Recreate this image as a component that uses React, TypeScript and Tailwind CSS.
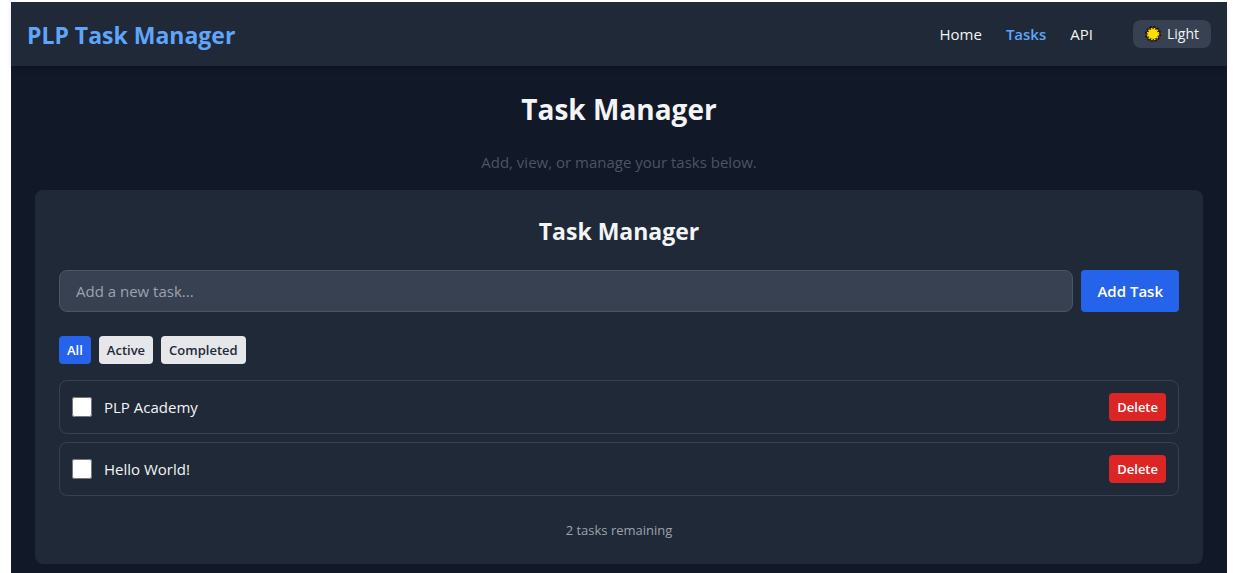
import { useState } from "react";
import type { FormEvent } from "react";

type Task = { id: number; title: string; done: boolean };
type Filter = "All" | "Active" | "Completed";

const filters: Filter[] = ["All", "Active", "Completed"];

function SunIcon() {
  return (
    <svg viewBox="0 0 16 16" className="size-4 shrink-0" aria-hidden="true">
      <circle cx="8" cy="8" r="6.9" fill="none" stroke="#151515" strokeWidth="2.2" strokeDasharray="2.2 1.41" />
      <circle cx="8" cy="8" r="6.4" fill="#151515" />
      <circle cx="8" cy="8" r="5.5" fill="none" stroke="#ffd800" strokeWidth="1.6" strokeDasharray="1.7 1.18" />
      <circle cx="8" cy="8" r="5.1" fill="#ffde00" />
    </svg>
  );
}

function Header() {
  return (
    <header className="flex h-16 items-center justify-between bg-[#1f2937] px-4 shadow-md">
      <div className="pt-0.5 text-[23px] leading-8 font-bold text-[#60a5fa]">PLP Task Manager</div>
      <div className="flex items-center gap-10">
        <nav className="flex gap-6 text-[15px] leading-6">
          <a href="#home">Home</a>
          <a href="#tasks" className="font-semibold text-[#60a5fa]">Tasks</a>
          <a href="#api">API</a>
        </nav>
        <button type="button" className="flex h-7 items-center gap-1.5 rounded-lg bg-[#374151] px-3 text-[14px] leading-5">
          <SunIcon />
          Light
        </button>
      </div>
    </header>
  );
}

export default function App() {
  const [tasks, setTasks] = useState<Task[]>([
    { id: 1, title: "PLP Academy", done: false },
    { id: 2, title: "Hello World!", done: false },
  ]);
  const [filter, setFilter] = useState<Filter>("All");
  const [draft, setDraft] = useState("");

  const visible = tasks.filter((t) => filter === "All" || (filter === "Completed") === t.done);
  const remaining = tasks.filter((t) => !t.done).length;

  const addTask = (e: FormEvent) => {
    e.preventDefault();
    if (!draft.trim()) return;
    setTasks([...tasks, { id: Date.now(), title: draft.trim(), done: false }]);
    setDraft("");
  };

  return (
    <div className="min-h-screen bg-white pt-0.5 pr-1.5 pl-[11px] font-['Open_Sans','Noto_Sans',sans-serif] text-[#f3f4f6]">
      <div className="flex min-h-[calc(100vh-2px)] flex-col bg-[#111827]">
        <Header />
        <main className="px-6 pt-6 pb-2">
          <h1 className="mb-6 pt-0.5 text-center text-[28px] leading-[34px] font-bold">Task Manager</h1>
          <p className="mb-4 text-center text-[15px] leading-6 text-[#4b5563]">Add, view, or manage your tasks below.</p>

          <section className="rounded-lg bg-[#1f2937] p-6">
            <h2 className="mb-6 pt-0.5 text-center text-[23px] leading-[30px] font-bold">Task Manager</h2>

            <form onSubmit={addTask} className="mb-6 flex gap-2">
              <input
                type="text"
                aria-label="New task"
                placeholder="Add a new task..."
                value={draft}
                onChange={(e) => setDraft(e.target.value)}
                className="h-[42px] min-w-0 flex-1 rounded-lg border border-[#4b5563] bg-[#374151] px-4 text-[15px] leading-6 placeholder:text-[#9ca3af]"
              />
              <button type="submit" className="rounded bg-[#2563eb] px-4 text-[15px] leading-6 font-semibold text-white">
                Add Task
              </button>
            </form>

            <div className="mb-4 flex gap-2">
              {filters.map((name) => (
                <button
                  key={name}
                  type="button"
                  onClick={() => setFilter(name)}
                  className={
                    name === filter
                      ? "rounded bg-[#2563eb] px-2 py-1 text-[13px] leading-5 font-semibold text-white"
                      : "rounded bg-[#e5e7eb] px-2 py-1 text-[13px] leading-5 font-semibold text-[#1f2937]"
                  }
                >
                  {name}
                </button>
              ))}
            </div>

            <ul className="flex flex-col gap-2">
              {visible.map((task) => (
                <li key={task.id} className="flex items-center justify-between rounded-lg border border-[#374151] p-3">
                  <label className="flex items-center gap-3 text-[15px] leading-6">
                    <input
                      type="checkbox"
                      checked={task.done}
                      onChange={() => setTasks(tasks.map((t) => (t.id === task.id ? { ...t, done: !t.done } : t)))}
                      className="size-5"
                    />
                    {task.title}
                  </label>
                  <button
                    type="button"
                    onClick={() => setTasks(tasks.filter((t) => t.id !== task.id))}
                    className="rounded bg-[#dc2626] px-2 py-1 text-[13px] leading-5 font-semibold text-white"
                  >
                    Delete
                  </button>
                </li>
              ))}
            </ul>

            <p className="mt-6 text-center text-[13px] leading-5 text-[#9ca3af]">{remaining} tasks remaining</p>
          </section>
        </main>
      </div>
    </div>
  );
}
